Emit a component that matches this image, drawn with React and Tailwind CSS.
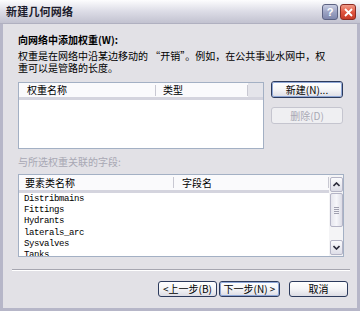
import React from "react";

const cjk = { fontFamily: '"Noto Sans CJK SC", "Noto Sans", sans-serif' };
const mono = { fontFamily: '"Liberation Mono", monospace' };

function XPButton({ children, className = "", focused = false, disabled = false }) {
  if (disabled) {
    return (
      <div
        className={`flex items-center justify-center rounded-[3px] border border-[#c5c5cf] bg-[#efeff2] text-[#a9a9b4] text-[10px] leading-none ${className}`}
      >
        {children}
      </div>
    );
  }
  return (
    <div
      className={`flex items-center justify-center rounded-[3px] border border-[#2c3a5c] bg-gradient-to-b from-[#ffffff] via-[#f5f5f7] to-[#dcdce4] text-black text-[10px] leading-none ${className}`}
    >
      <div
        className={`flex h-full w-full items-center justify-center rounded-[2px] ${
          focused ? "border border-[#8fa7d6]" : ""
        }`}
      >
        {children}
      </div>
    </div>
  );
}

function HeaderDivider() {
  return <div className="h-[11px] w-px bg-[#c8c8d2]" />;
}

function ScrollArrow({ up }) {
  return (
    <div className="flex h-[15px] w-[13px] items-center justify-center rounded-[2px] border border-[#b4b4c6] bg-gradient-to-b from-[#fbfbfd] to-[#dedee8]">
      <svg width="7" height="5" viewBox="0 0 7 5">
        {up ? (
          <path d="M0.5 4 L3.5 1 L6.5 4" stroke="#2b2b3b" strokeWidth="1.6" fill="none" />
        ) : (
          <path d="M0.5 1 L3.5 4 L6.5 1" stroke="#2b2b3b" strokeWidth="1.6" fill="none" />
        )}
      </svg>
    </div>
  );
}

export default function App() {
  const rows = ["Distribmains", "Fittings", "Hydrants", "laterals_arc", "Sysvalves", "Tanks"];
  return (
    <div className="flex h-[311px] w-[360px] flex-col overflow-hidden bg-[#a9a9bc]" style={cjk}>
      {/* Title bar */}
      <div className="flex h-[24px] shrink-0 items-center justify-between bg-gradient-to-b from-[#fdfdfe] via-[#dcdce6] to-[#c2c2d0] pl-[6px] pr-[4px] border-b border-[#b0b0c0]">
        <span className="text-[11px] font-bold leading-none text-[#1c1c2c] tracking-[0.2px]">新建几何网络</span>
        <div className="flex items-center gap-[2px] pt-[1px]">
          <div className="flex h-[16px] w-[16px] items-center justify-center rounded-[3px] border border-[#5d6383] bg-gradient-to-b from-[#c9cde2] via-[#9da4c4] to-[#7f87ad]">
            <span className="text-[11px] font-bold leading-none text-white" style={{ fontFamily: '"Liberation Sans", sans-serif' }}>?</span>
          </div>
          <div className="flex h-[16px] w-[16px] items-center justify-center rounded-[3px] border border-[#8a2b22] bg-gradient-to-b from-[#f09a88] via-[#e0553f] to-[#c63a27]">
            <svg width="9" height="9" viewBox="0 0 9 9">
              <path d="M1 1 L8 8 M8 1 L1 8" stroke="white" strokeWidth="1.8" />
            </svg>
          </div>
        </div>
      </div>

      {/* Body with frame */}
      <div className="flex flex-1 flex-col border-l-[3px] border-r-[3px] border-b-[3px] border-[#b6b6c8] bg-[#e2e1e6] pl-[15px] pr-[9px]">
        <div className="mt-[10px] text-[10px] font-bold leading-[12px] text-black">向网络中添加权重(W):</div>
        <div className="mt-[4px] text-[10px] leading-[12px] text-black">
          <div className="whitespace-nowrap">权重是在网络中沿某边移动的 “开销”。例如，在公共事业水网中，权</div>
          <div>重可以是管路的长度。</div>
        </div>

        {/* Weights list and buttons */}
        <div className="mt-[8px] flex">
          <div className="flex h-[67px] w-[246px] flex-col border border-[#a3b0c4] bg-white">
            <div className="flex h-[17px] items-center border-b-[3px] border-[#d4d4de] bg-[#fafafc] text-[10px] leading-none">
              <div className="w-[136px] pl-[8px]">权重名称</div>
              <HeaderDivider />
              <div className="w-[91px] pl-[7px]">类型</div>
              <HeaderDivider />
              <div className="h-full flex-1 bg-[#e4e4ea]" />
            </div>
            <div className="flex-1" />
          </div>
          <div className="ml-[7px] flex flex-col gap-[9px] -mt-[1px]">
            <XPButton className="h-[17px] w-[72px]" focused>新建(N)...</XPButton>
            <XPButton className="h-[17px] w-[72px]" disabled>删除(D)</XPButton>
          </div>
        </div>

        <div className="mt-[7px] text-[10px] leading-[12px] text-[#a8a8b4]">与所选权重关联的字段:</div>

        {/* Fields list */}
        <div className="mt-[6px] flex h-[83px] w-[326px] border border-[#a3b0c4] bg-white overflow-hidden">
          <div className="flex flex-1 flex-col overflow-hidden">
            <div className="flex h-[18px] shrink-0 items-center border-b-[3px] border-[#d4d4de] bg-[#fafafc] text-[10px] leading-none">
              <div className="w-[154px] pl-[6px]">要素类名称</div>
              <HeaderDivider />
              <div className="w-[154px] pl-[8px]">字段名</div>
              <HeaderDivider />
            </div>
            <div className="pl-[5px] pt-[1px]" style={mono}>
              {rows.map((r) => (
                <div key={r} className="h-[11.2px] text-[9px] leading-[11.2px] tracking-[-0.4px] text-black">
                  {r}
                </div>
              ))}
            </div>
          </div>
          <div className="flex w-[14px] flex-col items-center bg-[#f4f4f6] pt-[2px] pb-[1px]">
            <ScrollArrow up />
            <div className="mt-[1px] flex h-[34px] w-[13px] items-center justify-center rounded-[2px] border border-[#b4b4c6] bg-gradient-to-r from-[#e6e6ee] via-[#f6f6fa] to-[#dcdce6]">
              <div className="flex flex-col gap-[1px]">
                <div className="h-px w-[5px] bg-[#a0a0b0]" />
                <div className="h-px w-[5px] bg-[#a0a0b0]" />
                <div className="h-px w-[5px] bg-[#a0a0b0]" />
                <div className="h-px w-[5px] bg-[#a0a0b0]" />
              </div>
            </div>
            <div className="flex-1" />
            <ScrollArrow />
          </div>
        </div>

        {/* Separator */}
        <div className="mt-[12px] -ml-[6px] mr-[-2px] border-t border-[#a6a6b0] border-b border-b-white" />

        {/* Bottom buttons */}
        <div className="mt-[10px] flex pl-[140px]">
          <XPButton className="h-[16px] w-[60px]">&lt;上一步(B)</XPButton>
          <XPButton className="ml-[2px] h-[16px] w-[62px]" focused>下一步(N) &gt;</XPButton>
          <XPButton className="ml-[9px] h-[16px] w-[60px]">取消</XPButton>
        </div>
      </div>
    </div>
  );
}
